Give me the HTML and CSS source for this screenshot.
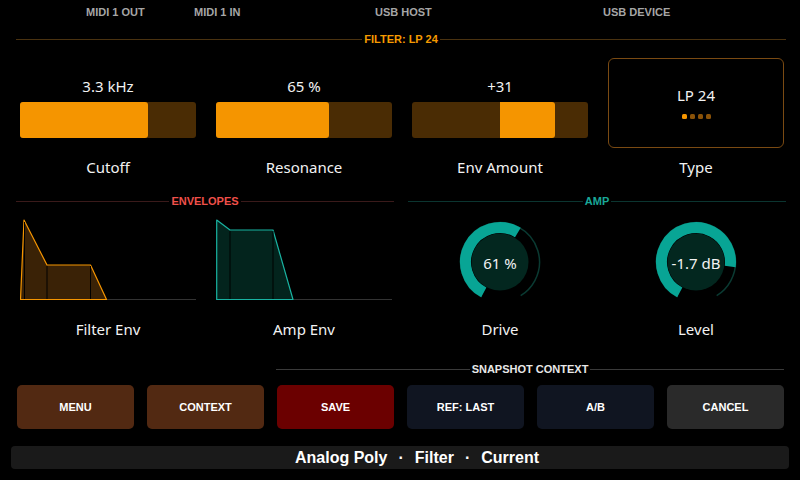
FILE: index.html
```html
<!DOCTYPE html>
<html lang="en">
<head>
    <meta charset="UTF-8">
    <meta name="viewport" content="width=device-width, initial-scale=1.0">
    <title>Analog Poly - Filter</title>
    <link rel="stylesheet" href="styles.css">
</head>
<body>
    <div class="status">
        <span>MIDI 1 OUT</span>
        <span>MIDI 1 IN</span>
        <span>USB HOST</span>
        <span>USB DEVICE</span>
    </div>

    <div class="section-head filter-head full">
        <div class="rule"></div><span>FILTER: LP 24</span><div class="rule"></div>
    </div>

    <div class="params">
        <div class="param">
            <div class="control">
                <div class="value">3.3 kHz</div>
                <div class="bar"><div class="fill" style="width: 73%"></div></div>
            </div>
            <div class="label">Cutoff</div>
        </div>
        <div class="param">
            <div class="control">
                <div class="value">65 %</div>
                <div class="bar"><div class="fill" style="width: 64%"></div></div>
            </div>
            <div class="label">Resonance</div>
        </div>
        <div class="param">
            <div class="control">
                <div class="value">+31</div>
                <div class="bar"><div class="fill bipolar" style="margin-left: 50%; width: 31%"></div></div>
            </div>
            <div class="label">Env Amount</div>
        </div>
        <div class="param">
            <div class="control type-box">
                <div class="type-name">LP 24</div>
                <div class="dots">
                    <i class="on"></i><i></i><i></i><i></i>
                </div>
            </div>
            <div class="label">Type</div>
        </div>
    </div>

    <div class="halves">
        <div class="half">
            <div class="section-head env-head">
                <div class="rule"></div><span>ENVELOPES</span><div class="rule"></div>
            </div>
            <div class="pair">
                <div class="param">
                    <svg class="graph" width="176" height="84" viewBox="0 0 176 84">
                        <line x1="0" y1="80.5" x2="176" y2="80.5" stroke="#333" stroke-width="1"/>
                        <polygon points="0.5,80.5 4,1 27,46 70.5,46 86.5,80.5" fill="#3a2206" stroke="#f59500" stroke-width="1.2" stroke-linejoin="round"/>
                        <line x1="4.5" y1="3" x2="4.5" y2="80" stroke="#000" stroke-width="1"/>
                        <line x1="27" y1="47" x2="27" y2="80" stroke="#000" stroke-width="1"/>
                        <line x1="70.5" y1="47" x2="70.5" y2="80" stroke="#000" stroke-width="1"/>
                    </svg>
                    <div class="label">Filter Env</div>
                </div>
                <div class="param">
                    <svg class="graph" width="176" height="84" viewBox="0 0 176 84">
                        <line x1="0" y1="80.5" x2="176" y2="80.5" stroke="#333" stroke-width="1"/>
                        <polygon points="0.7,80.5 0.7,1 14,11 57,11 77,80.5" fill="#03241d" stroke="#19b3a2" stroke-width="1.2" stroke-linejoin="round"/>
                        <line x1="14" y1="12" x2="14" y2="80" stroke="#000" stroke-width="1"/>
                        <line x1="57" y1="12" x2="57" y2="80" stroke="#000" stroke-width="1"/>
                    </svg>
                    <div class="label">Amp Env</div>
                </div>
            </div>
        </div>
        <div class="half">
            <div class="section-head amp-head">
                <div class="rule"></div><span>AMP</span><div class="rule"></div>
            </div>
            <div class="pair">
                <div class="param">
                    <svg class="knob" width="176" height="84" viewBox="0 0 176 84">
                        <circle cx="88" cy="43" r="39.5" fill="none" stroke="#0a3a32" stroke-width="1.5"
                                stroke-dasharray="206.8 300" transform="rotate(118 88 43)"/>
                        <circle cx="88" cy="43" r="34.5" fill="none" stroke="#08a595" stroke-width="11"
                                stroke-dasharray="110.2 300" transform="rotate(118 88 43)"/>
                        <circle cx="88" cy="43" r="28.5" fill="#03271f"/>
                        <text x="88" y="44" class="knob-text">61 %</text>
                    </svg>
                    <div class="label">Drive</div>
                </div>
                <div class="param">
                    <svg class="knob" width="176" height="84" viewBox="0 0 176 84">
                        <circle cx="88" cy="43" r="39.5" fill="none" stroke="#0a3a32" stroke-width="1.5"
                                stroke-dasharray="206.8 300" transform="rotate(118 88 43)"/>
                        <circle cx="88" cy="43" r="34.5" fill="none" stroke="#08a595" stroke-width="11"
                                stroke-dasharray="149.9 300" transform="rotate(118 88 43)"/>
                        <circle cx="88" cy="43" r="28.5" fill="#03271f"/>
                        <text x="88" y="44" class="knob-text">-1.7 dB</text>
                    </svg>
                    <div class="label">Level</div>
                </div>
            </div>
        </div>
    </div>

    <div class="actions">
        <div class="section-head snap-head">
            <div class="rule"></div><span>SNAPSHOT CONTEXT</span><div class="rule"></div>
        </div>
        <button class="btn brown">MENU</button>
        <button class="btn brown">CONTEXT</button>
        <button class="btn red">SAVE</button>
        <button class="btn navy">REF: LAST</button>
        <button class="btn navy">A/B</button>
        <button class="btn grey">CANCEL</button>
    </div>

    <div class="footer">
        <span>Analog Poly</span><span>·</span><span>Filter</span><span>·</span><span>Current</span>
    </div>
</body>
</html>
```

FILE: styles.css
```css
body {
    margin: 0;
    width: 800px;
    height: 480px;
    overflow: hidden;
    background: #000;
    color: #f2f2f2;
    font-family: 'Noto Sans', sans-serif;
}
.status {
    display: grid;
    grid-template-columns: 108px 181px 228px 1fr;
    padding-left: 86px;
    height: 24px;
    font: bold 11px/24px 'Liberation Sans', Arial, sans-serif;
    color: #a6a6a6;
}
.section-head {
    display: flex;
    align-items: center;
    height: 18px;
    font: bold 11px/18px 'Liberation Sans', Arial, sans-serif;
}
.section-head span {
    margin: 0 2px;
}
.section-head .rule {
    flex: 1;
    height: 1px;
}
.full {
    margin: 6px 14px 0 16px;
}
.filter-head { color: #f59a00; }
.filter-head .rule { background: #4a3210; }
.env-head { color: #f0504a; }
.env-head .rule { background: #3a1a1a; }
.amp-head { color: #19a898; }
.amp-head .rule { background: #0b3530; }
.snap-head {
    grid-column: 3 / -1;
    margin-left: -1px;
    color: #e8e8e8;
}
.snap-head .rule { background: #3a3a3a; }

.params {
    display: grid;
    grid-template-columns: repeat(4, 176px);
    gap: 20px;
    padding-left: 20px;
    margin-top: 10px;
}
.param {
    display: flex;
    flex-direction: column;
    align-items: center;
}
.control {
    width: 100%;
    height: 90px;
    box-sizing: border-box;
    display: flex;
    flex-direction: column;
    justify-content: flex-end;
    align-items: center;
    padding-bottom: 10px;
}
.value {
    font-size: 15px;
    line-height: 20px;
    margin-bottom: 6px;
}
.bar {
    width: 100%;
    height: 36px;
    background: #4a2c04;
    border-radius: 3px;
    display: flex;
}
.fill {
    height: 100%;
    background: #f59500;
    border-radius: 3px;
}
.fill.bipolar {
    border-radius: 0 3px 3px 0;
}
.label {
    font-size: 15px;
    line-height: 20px;
    margin-top: 9px;
}
.type-box {
    border: 1px solid #7a4a12;
    border-radius: 6px;
    justify-content: flex-start;
    padding: 26px 0 0;
}
.type-name {
    font-size: 15px;
    line-height: 20px;
    margin-bottom: 9px;
}
.dots {
    display: flex;
    gap: 3px;
}
.dots i {
    width: 5px;
    height: 5px;
    border-radius: 1.5px;
    background: #8a5208;
}
.dots i.on {
    background: #f59500;
}

.halves {
    display: grid;
    grid-template-columns: 378px 378px;
    gap: 14px;
    padding-left: 16px;
    margin-top: 15px;
}
.pair {
    display: grid;
    grid-template-columns: repeat(2, 176px);
    gap: 20px;
    padding-left: 4px;
    margin-top: 9px;
}
.graph, .knob {
    display: block;
}
.pair .label {
    margin-top: 16px;
}
.knob-text {
    fill: #f2f2f2;
    font-family: 'Noto Sans', sans-serif;
    font-size: 15px;
    text-anchor: middle;
    dominant-baseline: central;
}

.actions {
    display: grid;
    grid-template-columns: repeat(6, 117px);
    column-gap: 13px;
    row-gap: 7px;
    padding-left: 17px;
    margin-top: 21px;
}
.btn {
    height: 44px;
    border: none;
    border-radius: 5px;
    color: #fff;
    font: bold 11px 'Liberation Sans', Arial, sans-serif;
    padding: 0;
}
.brown { background: #522912; }
.red { background: #6b0000; }
.navy { background: #101521; }
.grey { background: #2a2a2a; }

.footer {
    margin: 17px 11px 0 11px;
    height: 23px;
    background: #1a1a1a;
    border-radius: 4px;
    display: flex;
    justify-content: center;
    align-items: center;
    gap: 11px;
    padding-left: 34px;
    font: bold 16px/23px 'Liberation Sans', Arial, sans-serif;
    color: #fff;
}
```
